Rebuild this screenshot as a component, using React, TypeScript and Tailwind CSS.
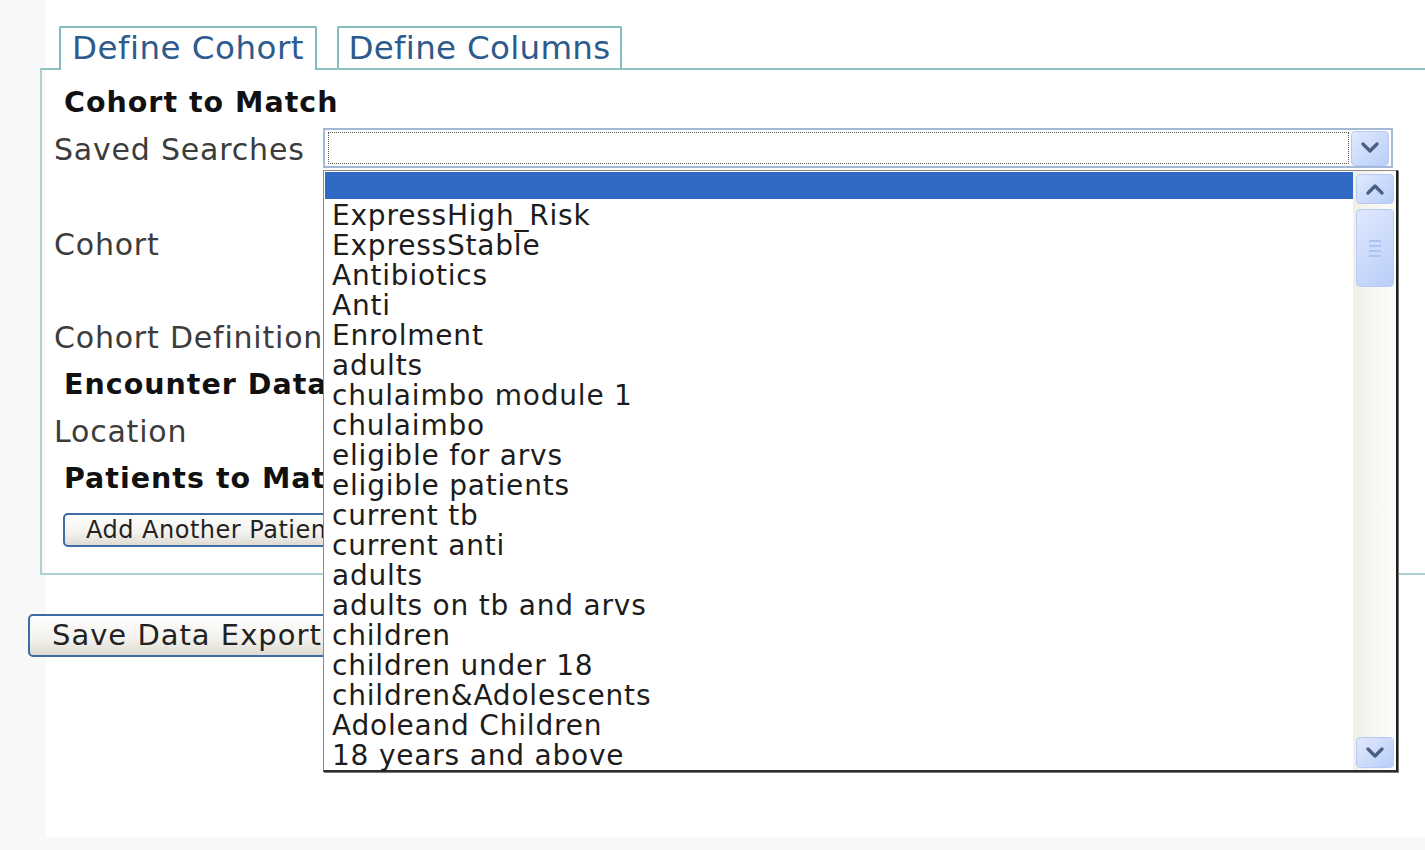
const savedSearches = [
  "ExpressHigh_Risk",
  "ExpressStable",
  "Antibiotics",
  "Anti",
  "Enrolment",
  "adults",
  "chulaimbo module 1",
  "chulaimbo",
  "eligible for arvs",
  "eligible patients",
  "current tb",
  "current anti",
  "adults",
  "adults on tb and arvs",
  "children",
  "children under 18",
  "children&Adolescents",
  "Adoleand Children",
  "18 years and above",
];

const labelClass =
  "w-[281px] shrink-0 pl-[12px] text-[30px] leading-none tracking-[0.8px] text-[#3c3c3c] whitespace-nowrap";
const headingClass =
  "pl-[22px] text-[28.5px] font-bold leading-none tracking-[1px] text-[#111] whitespace-nowrap";

const xpButtonClass =
  "flex items-center justify-center rounded-[4px] border border-[#b7cbf4] bg-[linear-gradient(135deg,#e0e9fd,#b9cef9)]";

const pushButtonClass =
  "flex items-center rounded-[5px] border-2 border-[#3f6aa8] bg-[linear-gradient(to_bottom,#ffffff,#f2f1ec_60%,#dedbd2)] leading-none text-[#222] whitespace-nowrap";

function Chevron({ up = false }: { up?: boolean }) {
  return (
    <svg width="20" height="12" viewBox="0 0 20 12">
      <polyline
        points={up ? "3,10 10,3 17,10" : "3,2 10,9 17,2"}
        fill="none"
        stroke="#4a5e82"
        strokeWidth="3.2"
        strokeLinecap="round"
        strokeLinejoin="round"
      />
    </svg>
  );
}

function SavedSearchSelect() {
  return (
    <div className="relative flex h-[40px] w-[1070px] shrink-0 items-center border-2 border-[#a3b9d6] bg-white">
      <div className="ml-[3px] h-[32px] flex-1 border border-dotted border-[#555]" />
      <div className={`${xpButtonClass} mx-[2px] h-[35px] w-[38px]`}>
        <Chevron />
      </div>

      {/* open list of the select */}
      <div className="absolute -left-[2px] top-[40px] z-10 flex h-[602px] w-[1075px] border-t border-l border-r-2 border-b-2 border-t-[#8a8a8a] border-l-[#8a8a8a] border-r-[#1e1e1e] border-b-[#2e2e2e] bg-white shadow-[1px_1px_0_#777]">
        <div className="flex-1 pt-[1px] pl-[1px]">
          <div className="mb-[1px] h-[27px] bg-[#316ac5]" />
          {savedSearches.map((name, i) => (
            <div
              key={i}
              className="h-[30px] pt-[1px] pl-[7px] text-[28px] leading-[30px] tracking-[0.8px] whitespace-nowrap text-[#1c1c1c]"
            >
              {name}
            </div>
          ))}
        </div>

        <div className="flex w-[43px] flex-col items-center bg-[linear-gradient(to_right,#f1efe8,#fdfdfa)] px-[2px] pt-[3px] pb-[2px]">
          <div className={`${xpButtonClass} h-[30px] w-[38px]`}>
            <Chevron up />
          </div>
          <div className={`${xpButtonClass} mt-[5px] h-[78px] w-[38px] flex-col gap-[3px]`}>
            <div className="h-[2px] w-[12px] bg-[#aec4f0]" />
            <div className="h-[2px] w-[12px] bg-[#aec4f0]" />
            <div className="h-[2px] w-[12px] bg-[#aec4f0]" />
            <div className="h-[2px] w-[12px] bg-[#aec4f0]" />
          </div>
          <div className="flex-1" />
          <div className={`${xpButtonClass} h-[31px] w-[38px]`}>
            <Chevron />
          </div>
        </div>
      </div>
    </div>
  );
}

export default function App() {
  return (
    <div className="h-[850px] w-full overflow-hidden bg-[#f8f8f8] font-['DejaVu_Sans','Verdana',sans-serif]">
      <div className="ml-[46px] h-[837px] bg-white">
        <div className="-ml-[6px] pt-[26px]">
          {/* tabs */}
          <div className="flex gap-[20px] pl-[19px]">
            <div className="relative z-[1] -mb-[2px] flex h-[44px] w-[258px] items-center justify-center rounded-t-[2px] border-2 border-b-0 border-[#86bcbc] bg-white pb-[2px] text-[32.5px] leading-none tracking-[0.5px] text-[#2c5b8c]">
              Define Cohort
            </div>
            <div className="flex h-[42px] w-[285px] items-center justify-center rounded-t-[2px] border-2 border-b-0 border-[#86bcbc] bg-white text-[32.5px] leading-none tracking-[0.3px] text-[#2c5b8c]">
              Define Columns
            </div>
          </div>

          {/* panel */}
          <div className="w-[1500px] border-2 border-r-0 border-[#a9d3d3] border-t-[#8fc2c2] pt-[14px] pb-[26px]">
            <div className={`${headingClass} flex h-[39px] items-center`}>Cohort to Match</div>

            <div className="flex h-[50px] items-center">
              <div className={`${labelClass} pt-[3px]`}>Saved Searches</div>
              <SavedSearchSelect />
            </div>

            <div className="flex h-[144px] items-center">
              <div className={labelClass}>Cohort</div>
            </div>

            <div className="flex h-[42px] items-center">
              <div className={labelClass}>Cohort Definition</div>
            </div>

            <div className={`${headingClass} flex h-[52px] items-center`}>Encounter Data</div>

            <div className="flex h-[42px] items-center">
              <div className={labelClass}>Location</div>
            </div>

            <div className={`${headingClass} flex h-[52px] items-center`}>Patients to Match</div>

            <div className="mt-[8px] pl-[21px]">
              <button
                type="button"
                className={`${pushButtonClass} h-[34px] px-[21px] text-[24px] tracking-[0.5px]`}
              >
                Add Another Patient
              </button>
            </div>
          </div>
        </div>

        <div className="-ml-[18px] mt-[39px]">
          <button type="button" className={`${pushButtonClass} h-[43px] px-[22px] text-[29px] tracking-[1px]`}>
            Save Data Export
          </button>
        </div>
      </div>
    </div>
  );
}
